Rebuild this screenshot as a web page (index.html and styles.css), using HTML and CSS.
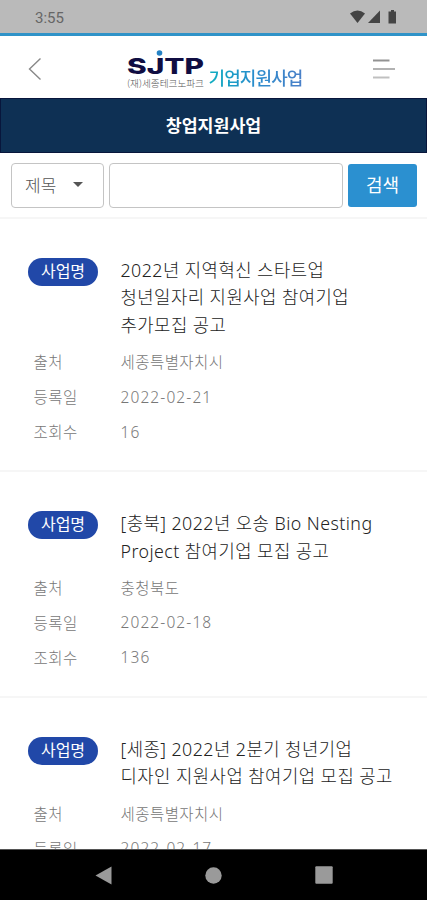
FILE: index.html
```html
<!DOCTYPE html>
<html lang="ko">
<head>
  <meta charset="UTF-8">
  <meta name="viewport" content="width=device-width, initial-scale=1.0">
  <title>창업지원사업</title>
  <link rel="stylesheet" href="styles.css">
</head>
<body>
  <div class="status-bar">
    <span class="time">3:55</span>
    <svg class="status-icons" width="50" height="16" viewBox="0 0 50 16">
      <path d="M1 4.5Q8.500 -1.500 16 4.500L8.500 14Z"/>
      <path d="M31 1.500V14H19Z"/>
      <path d="M42 2.500V1H45V2.500H47V14.500H39.500V2.500Z"/>
    </svg>
  </div>

  <header class="header">
    <svg class="back" width="14" height="24" viewBox="0 0 14 24">
      <path d="M12.500 1.500L1.500 12L12.500 22.500"/>
    </svg>
    <div class="logo">
      <svg class="logo-mark" width="78" height="42" viewBox="0 0 78 42">
        <circle cx="32.500" cy="4" r="2.800" fill="#2582c4"/>
        <text class="logo-name" x="0" y="25" textLength="77" lengthAdjust="spacingAndGlyphs">SJTP</text>
        <text class="logo-sub" x="0" y="38" textLength="77" lengthAdjust="spacingAndGlyphs">(재)세종테크노파크</text>
      </svg>
      <span class="logo-text">기업지원사업</span>
    </div>
    <svg class="menu" width="22" height="20" viewBox="0 0 22 20">
      <path d="M0 1.500H16.500" stroke="#929292"/>
      <path d="M0 10H22" stroke="#b2b2b2"/>
      <path d="M0 18.500H16.500" stroke="#c0c0c0"/>
    </svg>
  </header>

  <h1 class="page-title">창업지원사업</h1>

  <div class="search">
    <div class="select">제목<span class="caret"></span></div>
    <input class="keyword" type="text">
    <button class="search-btn">검색</button>
  </div>

  <main class="list">
    <section class="item">
      <div class="subject">
        <span class="badge">사업명</span>
        <h2>2022년 지역혁신 스타트업<br>청년일자리 지원사업 참여기업<br>추가모집 공고</h2>
      </div>
      <dl>
        <dt>출처</dt><dd>세종특별자치시</dd>
        <dt>등록일</dt><dd class="num">2022-02-21</dd>
        <dt>조회수</dt><dd class="num">16</dd>
      </dl>
    </section>
    <section class="item">
      <div class="subject">
        <span class="badge">사업명</span>
        <h2>[충북] 2022년 오송 Bio Nesting<br>Project 참여기업 모집 공고</h2>
      </div>
      <dl>
        <dt>출처</dt><dd>충청북도</dd>
        <dt>등록일</dt><dd class="num">2022-02-18</dd>
        <dt>조회수</dt><dd class="num">136</dd>
      </dl>
    </section>
    <section class="item">
      <div class="subject">
        <span class="badge">사업명</span>
        <h2>[세종] 2022년 2분기 청년기업<br>디자인 지원사업 참여기업 모집 공고</h2>
      </div>
      <dl>
        <dt>출처</dt><dd>세종특별자치시</dd>
        <dt>등록일</dt><dd class="num">2022-02-17</dd>
      </dl>
    </section>
  </main>

  <nav class="nav-bar">
    <svg width="17" height="19" viewBox="0 0 17 19"><path d="M16.500 .5V18.500L.5 9.500Z"/></svg>
    <svg width="17" height="17" viewBox="0 0 17 17"><circle cx="8.500" cy="8.500" r="8.200"/></svg>
    <svg width="18" height="18" viewBox="0 0 18 18"><rect x=".3" y=".3" width="17.400" height="17.400" rx="1"/></svg>
  </nav>
</body>
</html>
```
FILE: styles.css
```css
* {
  box-sizing: border-box;
}

body {
  margin: 0;
  height: 900px;
  display: flex;
  flex-direction: column;
  overflow: hidden;
  background: #fff;
  font-family: "Noto Sans", "Noto Sans CJK KR", sans-serif;
}

.status-bar {
  height: 36px;
  flex: none;
  display: flex;
  justify-content: space-between;
  align-items: center;
  padding: 0 28px 0 35px;
  background: #bababa;
  border-bottom: 3px solid #2f93c8;
}
.time {
  font-family: Roboto, sans-serif;
  font-size: 15px;
  line-height: 18px;
  padding-top: 2px;
  color: #666;
}
.status-icons {
  fill: #444;
  margin-top: 1px;
}

.header {
  height: 62px;
  flex: none;
  display: flex;
  justify-content: space-between;
  align-items: center;
  padding: 4px 32px 0 28px;
}
.back {
  fill: none;
  stroke: #888;
  stroke-width: 1.4;
}
.menu {
  stroke-width: 2;
}
.logo {
  display: flex;
  align-items: flex-end;
  gap: 4px;
  margin-left: 14px;
}
.logo-mark {
  margin-bottom: -1px;
}
.logo-name {
  font-family: Inter, sans-serif;
  font-size: 22px;
  font-weight: 800;
  fill: #100d42;
}
.logo-sub {
  font-family: "Noto Sans CJK KR", sans-serif;
  font-size: 9px;
  font-weight: 300;
  fill: #555;
}
.logo-text {
  font-family: "Noto Sans CJK KR", sans-serif;
  font-size: 18px;
  font-weight: 500;
  line-height: 26px;
  letter-spacing: -0.9px;
  background: linear-gradient(90deg, #0eadc0, #2a8ccd 50%, #4a80c8);
  -webkit-background-clip: text;
  background-clip: text;
  color: transparent;
}

.page-title {
  height: 55px;
  flex: none;
  margin: 0;
  background: #0e3054;
  border: 1px solid #08163c;
  color: #fff;
  font-family: "Noto Sans CJK KR", sans-serif;
  font-size: 17.3px;
  font-weight: 700;
  line-height: 51px;
  text-align: center;
}

.search {
  height: 66px;
  flex: none;
  display: flex;
  gap: 5px;
  padding: 10px 10px 0 11px;
  border-bottom: 2px solid #f6f6f6;
}
.select {
  width: 93px;
  height: 45px;
  display: flex;
  align-items: center;
  justify-content: space-between;
  padding: 0 20px 2px 13px;
  border: 1px solid #c4c4c4;
  border-radius: 4px;
  color: #555;
  font-size: 17px;
  font-weight: 300;
}
.caret {
  border: 5px solid transparent;
  border-top-color: #555;
  border-bottom: 0;
}
.keyword {
  flex: 1;
  min-width: 0;
  height: 45px;
  border: 1px solid #c4c4c4;
  border-radius: 4px;
}
.search-btn {
  width: 69px;
  height: 43px;
  margin-top: 1px;
  padding: 0 0 3px;
  border: none;
  border-radius: 3px;
  background: #2b90d0;
  color: #fff;
  font-family: "Noto Sans CJK KR", sans-serif;
  font-size: 18px;
  font-weight: 400;
}

.list {
  flex: 1;
  min-height: 0;
  overflow: hidden;
}
.item {
  padding: 37.5px 28px 21.3px;
  border-bottom: 2px solid #f6f6f6;
}
.subject {
  display: flex;
  align-items: flex-start;
  gap: 22.5px;
}
.badge {
  width: 70px;
  height: 28px;
  flex: none;
  margin-top: 1px;
  border-radius: 14px;
  background: #2148a8;
  color: #fff;
  font-size: 16px;
  line-height: 27px;
  text-align: center;
}
h2 {
  margin: 0;
  color: #222;
  font-size: 17.8px;
  font-weight: 300;
  line-height: 27.7px;
  letter-spacing: 0.45px;
  white-space: nowrap;
}
dl {
  display: grid;
  grid-template-columns: 87px 1fr;
  grid-auto-rows: 35px;
  align-items: center;
  margin: 4.5px 0 0;
  padding-left: 5.5px;
  color: #777;
  font-size: 15.5px;
  font-weight: 300;
  letter-spacing: 0.45px;
}
dd {
  margin: 0;
}
.num {
  letter-spacing: 1.1px;
}

.nav-bar {
  height: 51px;
  flex: none;
  display: flex;
  justify-content: space-between;
  align-items: center;
  padding: 0 94px 0 95px;
  background: #000;
  border-top: 1px solid #555;
}
.nav-bar svg {
  fill: #9a9a9a;
}
```
